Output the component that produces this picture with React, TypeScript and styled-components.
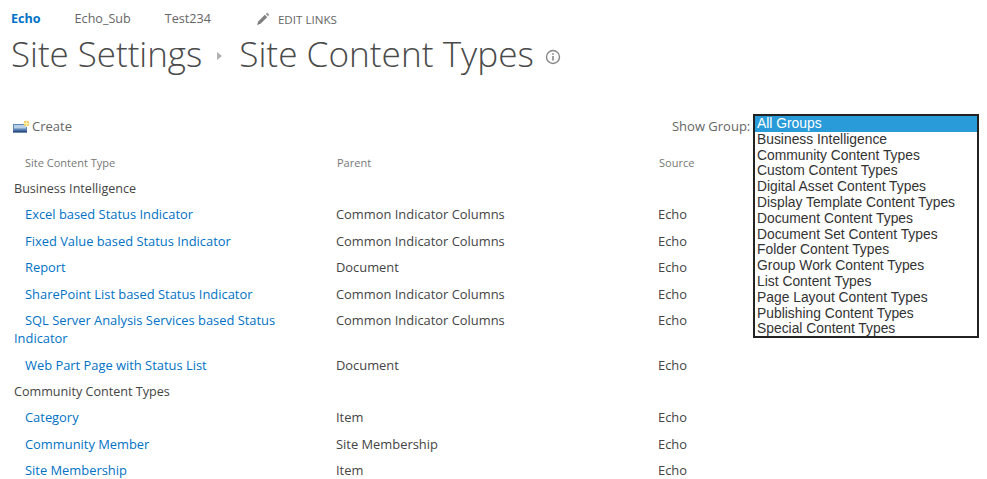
import styled, { createGlobalStyle } from "styled-components";

const GlobalStyle = createGlobalStyle`
  html, body {
    margin: 0;
    height: 479px;
    overflow: hidden;
    background: #fff;
  }
  body {
    font-family: "Open Sans", "Liberation Sans", sans-serif;
    color: #444;
  }
`;

const groups = [
  "All Groups",
  "Business Intelligence",
  "Community Content Types",
  "Custom Content Types",
  "Digital Asset Content Types",
  "Display Template Content Types",
  "Document Content Types",
  "Document Set Content Types",
  "Folder Content Types",
  "Group Work Content Types",
  "List Content Types",
  "Page Layout Content Types",
  "Publishing Content Types",
  "Special Content Types",
];

const sections = [
  {
    name: "Business Intelligence",
    rows: [
      ["Excel based Status Indicator", "Common Indicator Columns"],
      ["Fixed Value based Status Indicator", "Common Indicator Columns"],
      ["Report", "Document"],
      ["SharePoint List based Status Indicator", "Common Indicator Columns"],
      ["SQL Server Analysis Services based Status Indicator", "Common Indicator Columns"],
      ["Web Part Page with Status List", "Document"],
    ],
  },
  {
    name: "Community Content Types",
    rows: [
      ["Category", "Item"],
      ["Community Member", "Site Membership"],
      ["Site Membership", "Item"],
    ],
  },
];

function App() {
  return (
    <Page>
      <GlobalStyle />
      <TopNav>
        <NavLink $active>Echo</NavLink>
        <NavLink>Echo_Sub</NavLink>
        <NavLink>Test234</NavLink>
        <EditLinks>
          <svg width="14" height="14" viewBox="0 0 14 14">
            <path d="M1 13l1.2-3.6 6.6-6.6 2.4 2.4-6.6 6.6z" fill="#808080" />
            <path d="M9.6 2l1.6-1.4 2.2 2.2L12 4.4z" fill="#a0a0a0" />
          </svg>
          EDIT LINKS
        </EditLinks>
      </TopNav>

      <Title>
        Site Settings
        <Crumb />
        <CurrentPage>Site Content Types</CurrentPage>
        <InfoIcon width="16" height="16" viewBox="0 0 16 16">
          <circle cx="8" cy="8" r="6.5" fill="none" stroke="#888" strokeWidth="1.4" />
          <rect x="7.2" y="7" width="1.6" height="4.6" fill="#888" />
          <rect x="7.2" y="4.2" width="1.6" height="1.6" fill="#888" />
        </InfoIcon>
      </Title>

      <Toolbar>
        <CreateLink>
          <svg width="17" height="13" viewBox="0 0 17 13">
            <path d="M0 4h14v8.5H0z" fill="#5f86b8" />
            <path d="M1 5h12v3.5H1z" fill="#b9cfe8" />
            <path d="M0 10.5h14v2H0z" fill="#2f4f80" />
            <path d="M11 1h5v5h-5z" fill="#f2cf62" />
            <path d="M13 0h1.2v7H13zM10 3h7v1.2h-7z" fill="#fbeeb0" />
          </svg>
          Create
        </CreateLink>
        <ShowGroup>Show Group:</ShowGroup>
      </Toolbar>

      <Table>
        <HeaderRow>
          <HeaderCell $indent>Site Content Type</HeaderCell>
          <HeaderCell>Parent</HeaderCell>
          <HeaderCell>Source</HeaderCell>
        </HeaderRow>
        {sections.map((section) => (
          <section key={section.name}>
            <GroupRow>{section.name}</GroupRow>
            {section.rows.map(([name, parent]) => (
              <Row key={name}>
                <NameLink>{name}</NameLink>
                <span>{parent}</span>
                <span>Echo</span>
              </Row>
            ))}
          </section>
        ))}
      </Table>

      <GroupList>
        {groups.map((group, i) => (
          <GroupOption key={group} $selected={i === 0}>
            {group}
          </GroupOption>
        ))}
      </GroupList>
    </Page>
  );
}

const Page = styled.div`
  position: relative;
  width: 987px;
  height: 479px;
  overflow: hidden;
  box-sizing: border-box;
  padding: 9px 0 0 11px;
`;

const TopNav = styled.nav`
  display: flex;
  align-items: center;
  height: 18px;
  font-size: 12.6px;
`;

const NavLink = styled.a<{ $active?: boolean }>`
  margin-right: 34px;
  color: ${({ $active }) => ($active ? "#0072c6" : "#666")};
  font-weight: ${({ $active }) => ($active ? 700 : 400)};
`;

const EditLinks = styled.a`
  display: flex;
  align-items: center;
  gap: 8px;
  margin: 2px 0 0 11px;
  font-size: 11.6px;
  color: #666;
`;

const Title = styled.h1`
  display: flex;
  align-items: center;
  height: 40px;
  margin: 6px 0 0;
  font-size: 34.9px;
  font-weight: 300;
  color: #4a4a4a;
  white-space: nowrap;
`;

const CurrentPage = styled.span`
  font-size: 35.2px;
`;

const Crumb = styled.i`
  width: 0;
  height: 0;
  margin: 6px 17px 0 15px;
  border-left: 5px solid #b1b1b1;
  border-top: 4px solid transparent;
  border-bottom: 4px solid transparent;
`;

const InfoIcon = styled.svg`
  margin: 8px 0 0 11px;
`;

const Toolbar = styled.div`
  display: flex;
  align-items: center;
  height: 20px;
  margin-top: 43px;
  font-size: 13px;
  color: #666;
`;

const CreateLink = styled.a`
  display: flex;
  align-items: center;
  gap: 2px;
  margin-left: 2px;
`;

const ShowGroup = styled.span`
  margin-left: 600px;
`;

const Table = styled.div`
  margin: 14.3px 0 0 3px;
  width: 730px;
  font-size: 12.9px;
`;

const Columns = styled.div`
  display: grid;
  grid-template-columns: 322px 322px 86px;
`;

const HeaderRow = styled(Columns)`
  height: 25px;
  align-items: center;
  font-size: 11px;
  color: #777;
`;

const HeaderCell = styled.span<{ $indent?: boolean }>`
  padding-left: ${({ $indent }) => ($indent ? "11px" : "1px")};
`;

const GroupRow = styled.div`
  height: 26px;
  line-height: 27px;
  font-size: 12.6px;
  color: #444;
`;

const Row = styled(Columns)`
  padding: 4px 0 4.5px;
  line-height: 18px;
  color: #444;
`;

const NameLink = styled.a`
  padding-right: 30px;
  text-indent: 11px;
  color: #0072c6;
`;

const GroupList = styled.ul`
  position: absolute;
  top: 114px;
  left: 753px;
  width: 226px;
  height: 224px;
  margin: 0;
  padding: 0;
  box-sizing: border-box;
  list-style: none;
  background: #fff;
  border: 2px solid #222;
  font-family: "Liberation Sans", Arial, sans-serif;
  font-size: 13.85px;
  color: #333;
`;

const GroupOption = styled.li<{ $selected?: boolean }>`
  height: 15.8px;
  line-height: 15.8px;
  padding-left: 2px;
  white-space: nowrap;
  background: ${({ $selected }) => ($selected ? "#2a9bd9" : "transparent")};
  color: ${({ $selected }) => ($selected ? "#fff" : "#333")};
`;

export default App;
